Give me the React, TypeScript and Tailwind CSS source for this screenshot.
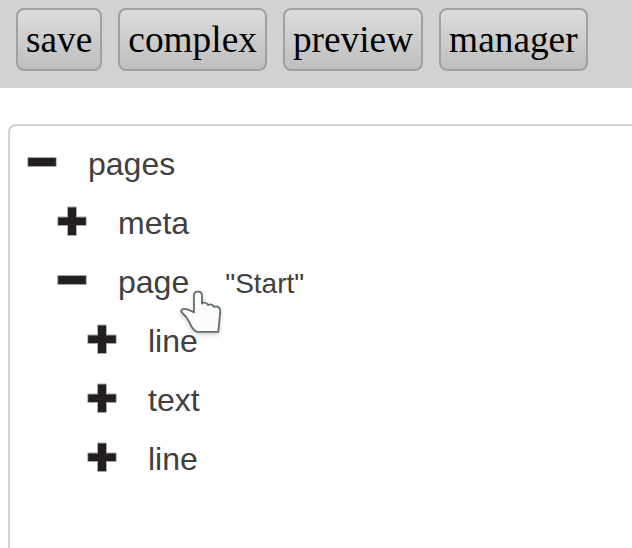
type Row = { label: string; open: boolean; depth: number; value?: string; hovered?: boolean };

const rows: Row[] = [
  { label: "pages", open: true, depth: 0 },
  { label: "meta", open: false, depth: 1 },
  { label: "page", open: true, depth: 1, value: '"Start"', hovered: true },
  { label: "line", open: false, depth: 2 },
  { label: "text", open: false, depth: 2 },
  { label: "line", open: false, depth: 2 },
];

const indents = ["pl-4", "pl-[46px]", "pl-[76px]"];

function ToggleIcon({ open }: { open: boolean }) {
  const d = open
    ? "M2.2 12H29.8V20H2.2Z"
    : "M12 2.4H20V12.4H29.8V20H20V30H12V20H2.2V12.4H12Z";
  return (
    <svg className="mb-[5px] size-8 shrink-0 blur-[0.4px]" viewBox="0 0 32 32">
      <path d={d} fill="#231f20" stroke="#231f20" strokeOpacity="0.4" strokeWidth="1.8" strokeLinejoin="round" />
    </svg>
  );
}

function HandCursor() {
  return (
    <svg
      className="absolute left-[60px] top-[33px] z-10 h-[50px] w-[46px] drop-shadow-[0_2px_2px_rgba(0,0,0,0.18)]"
      viewBox="178 286 46 50"
    >
      <path
        d="M194 312.5V295.5C194 290.2 202 290.2 202 295.5V303.5C204 301.8 207 302.7 208 305C210.5 303.8 213 304.5 214 307C217 305.5 220.5 307.5 220.3 311L218.3 331.9H198.5C195.5 331.9 193.5 329.8 191.5 326.5C189.5 323 188.5 319.5 185.8 316.5L181.8 312.5C180 310.5 182.5 308.5 184.8 308.9C188.5 309.2 191 311 194 312.5Z"
        fill="#fcfcfc"
        stroke="#636c6c"
        strokeWidth="1.8"
        strokeLinejoin="round"
      />
    </svg>
  );
}

export default function App() {
  return (
    <div className="flex h-[548px] w-full flex-col overflow-hidden bg-white">
      <header className="flex h-[88px] shrink-0 items-start gap-4 bg-[#d2d2d2] px-4 pt-2 font-['Liberation_Serif',serif] text-[37.33px] leading-[59px] text-black">
        {["save", "complex", "preview", "manager"].map((label) => (
          <button
            key={label}
            className="h-[63px] rounded-lg border-2 border-[#a0a0a0] bg-linear-to-b from-[#dcdcdc] to-[#bebebe] px-2"
          >
            {label}
          </button>
        ))}
      </header>
      <main className="-mr-4 ml-2 mt-9 flex-1 rounded-tl-lg border-l-2 border-t-2 border-[#d2d2d2] pt-[9px] font-['Liberation_Sans',sans-serif] text-[32px] leading-[59px] text-[#404040]">
        {rows.map((row, i) => (
          <div key={i} className={`flex h-[59px] items-center ${indents[row.depth]}`}>
            <ToggleIcon open={row.open} />
            <span className="relative ml-[30px]">
              {row.label}
              {row.hovered && <HandCursor />}
            </span>
            {row.value && <span className="ml-9 pt-px text-[28px]">{row.value}</span>}
          </div>
        ))}
      </main>
    </div>
  );
}
